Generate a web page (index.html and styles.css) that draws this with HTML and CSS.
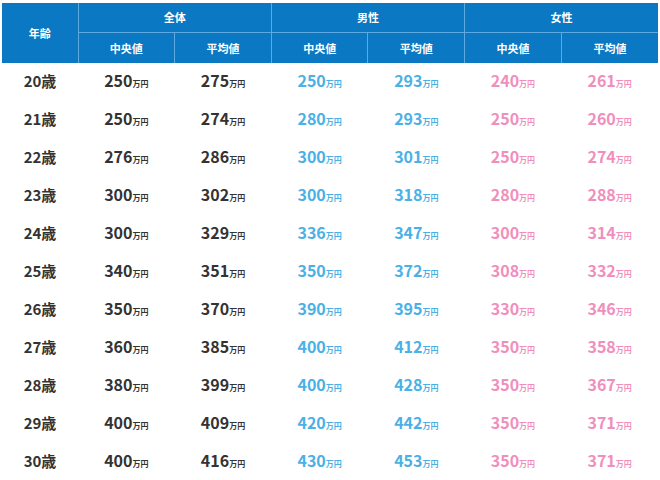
FILE: index.html
```html
<!DOCTYPE html>
<html lang="ja">
<head>
<meta charset="utf-8">
<link rel="stylesheet" href="styles.css">
</head>
<body>
<table class="salary">
  <colgroup>
    <col class="c-age">
    <col><col><col><col><col><col>
  </colgroup>
  <thead>
    <tr class="h1">
      <th rowspan="2" class="age-h">年齢</th>
      <th colspan="2" class="grp">全体</th>
      <th colspan="2" class="grp">男性</th>
      <th colspan="2" class="grp">女性</th>
    </tr>
    <tr class="h2">
      <th class="sub">中央値</th><th class="sub">平均値</th>
      <th class="sub">中央値</th><th class="sub">平均値</th>
      <th class="sub">中央値</th><th class="sub">平均値</th>
    </tr>
  </thead>
  <tbody>
    <tr><td class="age">20歳</td><td class="all">250<small>万円</small></td><td class="all">275<small>万円</small></td><td class="m">250<small>万円</small></td><td class="m">293<small>万円</small></td><td class="f">240<small>万円</small></td><td class="f">261<small>万円</small></td></tr>
    <tr><td class="age">21歳</td><td class="all">250<small>万円</small></td><td class="all">274<small>万円</small></td><td class="m">280<small>万円</small></td><td class="m">293<small>万円</small></td><td class="f">250<small>万円</small></td><td class="f">260<small>万円</small></td></tr>
    <tr><td class="age">22歳</td><td class="all">276<small>万円</small></td><td class="all">286<small>万円</small></td><td class="m">300<small>万円</small></td><td class="m">301<small>万円</small></td><td class="f">250<small>万円</small></td><td class="f">274<small>万円</small></td></tr>
    <tr><td class="age">23歳</td><td class="all">300<small>万円</small></td><td class="all">302<small>万円</small></td><td class="m">300<small>万円</small></td><td class="m">318<small>万円</small></td><td class="f">280<small>万円</small></td><td class="f">288<small>万円</small></td></tr>
    <tr><td class="age">24歳</td><td class="all">300<small>万円</small></td><td class="all">329<small>万円</small></td><td class="m">336<small>万円</small></td><td class="m">347<small>万円</small></td><td class="f">300<small>万円</small></td><td class="f">314<small>万円</small></td></tr>
    <tr><td class="age">25歳</td><td class="all">340<small>万円</small></td><td class="all">351<small>万円</small></td><td class="m">350<small>万円</small></td><td class="m">372<small>万円</small></td><td class="f">308<small>万円</small></td><td class="f">332<small>万円</small></td></tr>
    <tr><td class="age">26歳</td><td class="all">350<small>万円</small></td><td class="all">370<small>万円</small></td><td class="m">390<small>万円</small></td><td class="m">395<small>万円</small></td><td class="f">330<small>万円</small></td><td class="f">346<small>万円</small></td></tr>
    <tr><td class="age">27歳</td><td class="all">360<small>万円</small></td><td class="all">385<small>万円</small></td><td class="m">400<small>万円</small></td><td class="m">412<small>万円</small></td><td class="f">350<small>万円</small></td><td class="f">358<small>万円</small></td></tr>
    <tr><td class="age">28歳</td><td class="all">380<small>万円</small></td><td class="all">399<small>万円</small></td><td class="m">400<small>万円</small></td><td class="m">428<small>万円</small></td><td class="f">350<small>万円</small></td><td class="f">367<small>万円</small></td></tr>
    <tr><td class="age">29歳</td><td class="all">400<small>万円</small></td><td class="all">409<small>万円</small></td><td class="m">420<small>万円</small></td><td class="m">442<small>万円</small></td><td class="f">350<small>万円</small></td><td class="f">371<small>万円</small></td></tr>
    <tr><td class="age">30歳</td><td class="all">400<small>万円</small></td><td class="all">416<small>万円</small></td><td class="m">430<small>万円</small></td><td class="m">453<small>万円</small></td><td class="f">350<small>万円</small></td><td class="f">371<small>万円</small></td></tr>
  </tbody>
</table>
</body>
</html>
```
FILE: styles.css
```css
html, body {
  margin: 0;
  padding: 0;
  background: #ffffff;
}
body {
  font-family: "Noto Sans CJK JP", "Noto Sans", sans-serif;
  overflow: hidden;
}
.salary {
  margin: 3px 0 0 2px;
  width: 656px;
  table-layout: fixed;
  border-collapse: collapse;
  border-spacing: 0;
}
.c-age {
  width: 76px;
}
.salary th {
  background: #0a78c2;
  color: #ffffff;
  font-weight: 700;
  font-size: 11px;
  line-height: 1;
  padding: 0;
  text-align: center;
  vertical-align: middle;
}
.h1 th {
  height: 29px;
}
.h2 th {
  height: 30px;
  border-top: 1px solid #5eaae0;
}
.grp, .sub {
  border-left: 1px solid #5eaae0;
}
.age-h {
  border: none;
}
.salary td {
  height: 34px;
  padding: 0 0 4px;
  text-align: center;
  vertical-align: middle;
  font-weight: 700;
  font-size: 16px;
  line-height: 1;
  color: #333333;
}
.salary td small {
  font-size: 8px;
  font-weight: 700;
}
.salary td.age {
  font-size: 15px;
}
.salary td.m {
  color: #4ab1e6;
}
.salary td.f {
  color: #f08fbd;
}
```
